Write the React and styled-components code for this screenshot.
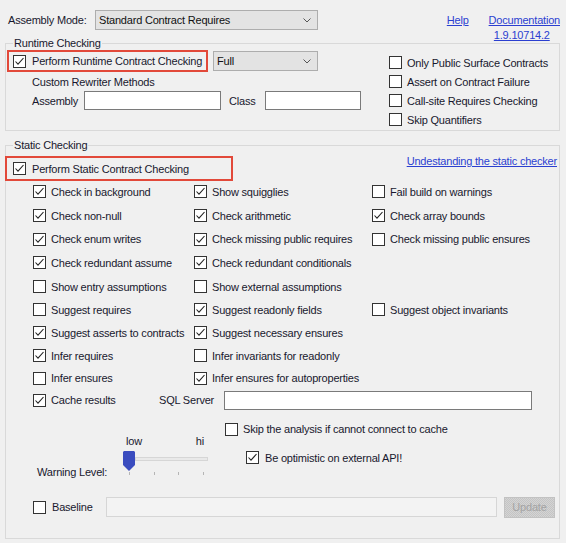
import React from "react";
import styled, { createGlobalStyle } from "styled-components";

const GlobalStyle = createGlobalStyle`
  body {
    margin: 0;
    background: #f0f0f0;
  }
`;

const Dialog = styled.div`
  width: 566px;
  height: 543px;
  background: #f0f0f0;
  font-family: "Liberation Sans", Arial, sans-serif;
  font-size: 11px;
  letter-spacing: -0.2px;
  line-height: 14px;
  color: #18182e;
  overflow: hidden;
`;

const TopBar = styled.div`
  display: flex;
  align-items: flex-start;
  height: 36px;
  padding: 10px 6px 0 8px;
  box-sizing: border-box;
`;

const FieldLabel = styled.span`
  width: ${(p) => p.$w}px;
  line-height: ${(p) => p.$lh || 14}px;
  margin-left: ${(p) => p.$ml || 0}px;
  flex: 0 0 auto;
  white-space: nowrap;
`;

const SelectBox = styled.div`
  width: ${(p) => p.$w}px;
  height: 20px;
  box-sizing: border-box;
  border: 1px solid #adadad;
  background: #e3e3e3;
  display: flex;
  align-items: center;
  justify-content: space-between;
  padding: 0 6px 0 3px;
  margin-left: ${(p) => p.$ml || 0}px;
  flex: 0 0 auto;
  color: #111;
`;

const Link = styled.a`
  color: #2b3fd0;
  text-decoration: underline;
  white-space: nowrap;
  cursor: pointer;
`;

const HelpLink = styled(Link)`
  margin-left: auto;
  margin-right: 20px;
  line-height: 20px;
`;

const DocColumn = styled.div`
  display: flex;
  flex-direction: column;
  align-items: center;
  line-height: 20px;
`;

const Version = styled(Link)`
  line-height: 14px;
  margin-top: -2px;
  margin-left: -5px;
`;

const GroupBox = styled.fieldset`
  margin: ${(p) => p.$mt || 0}px 0 0 5px;
  padding: 0;
  width: 555px;
  height: ${(p) => p.$h}px;
  box-sizing: border-box;
  border: 1px solid #d9d9d9;
  min-width: 0;
`;

const Legend = styled.legend`
  padding: 0 1px;
  margin-left: 7px;
  line-height: 14px;
`;

const RuntimeBody = styled.div`
  display: flex;
`;

const LeftColumn = styled.div`
  flex: 0 0 383px;
  display: flex;
  flex-direction: column;
`;

const Row = styled.div`
  display: flex;
  align-items: center;
  height: ${(p) => p.$h || 20}px;
  margin-top: ${(p) => p.$mt || 0}px;
  padding-left: ${(p) => p.$pl || 0}px;
`;

const RedFrame = styled.div`
  display: flex;
  align-items: center;
  box-sizing: border-box;
  width: ${(p) => p.$w}px;
  height: ${(p) => p.$h}px;
  margin-left: ${(p) => p.$ml}px;
  padding-left: ${(p) => p.$pl}px;
  border: 2px solid #e2493a;
`;

const SubHeading = styled.div`
  margin: 3px 0 0 26px;
`;

const TextBox = styled.div`
  width: ${(p) => p.$w}px;
  height: ${(p) => p.$h || 19}px;
  box-sizing: border-box;
  border: 1px solid ${(p) => (p.$disabled ? "#d6d6d6" : "#7a7a7a")};
  background: ${(p) => (p.$disabled ? "#f3f3f3" : "#fff")};
  flex: 0 0 auto;
`;

const RightColumn = styled.div`
  display: flex;
  flex-direction: column;
  margin-top: 3px;
`;

const CheckItem = styled.label`
  display: flex;
  align-items: center;
  gap: ${(p) => p.$gap || 5}px;
  height: ${(p) => p.$h || 19}px;
  width: ${(p) => (p.$w ? p.$w + "px" : "auto")};
  margin-left: ${(p) => p.$ml || 0}px;
  margin-top: ${(p) => p.$mt || 0}px;
  white-space: nowrap;
  flex: 0 0 auto;
`;

const Box = styled.span`
  width: 13px;
  height: 13px;
  flex: 0 0 13px;
  box-sizing: border-box;
  border: 1px solid #333;
  background: #fff;
  display: flex;
  align-items: center;
  justify-content: center;
`;

const StaticHeader = styled.div`
  display: flex;
  justify-content: space-between;
  align-items: flex-start;
  margin-top: 4px;
  padding-right: 2px;
`;

const HeaderLink = styled(Link)`
  margin-top: -2px;
`;

const OptionGrid = styled.div`
  display: grid;
  grid-template-columns: 161px 178px 1fr;
  grid-template-rows: 23px 25px 22px 25px 23px 23px 23px 23px 22px;
  align-items: center;
  padding-left: 27px;
  margin-top: -1px;
`;

const SliderRow = styled.div`
  display: flex;
  align-items: flex-start;
  height: 42px;
  margin-top: -3px;
  padding-left: 31px;
`;

const WarnLabel = styled.span`
  width: 86px;
  margin-top: 31px;
  white-space: nowrap;
`;

const SliderBlock = styled.div`
  width: 88px;
  display: flex;
  flex-direction: column;
`;

const SliderLabels = styled.div`
  display: flex;
  justify-content: space-between;
  padding: 0 7px 0 3px;
  height: 14px;
`;

const TrackArea = styled.div`
  position: relative;
  height: 24px;
`;

const TrackLine = styled.div`
  margin: 9px 3px 0 12px;
  height: 4px;
  box-sizing: border-box;
  border: 1px solid #d6d6d6;
  background: #e9e9e9;
`;

const Thumb = styled.svg`
  position: absolute;
  left: 0;
  top: 3px;
`;

const Ticks = styled.div`
  display: flex;
  justify-content: space-between;
  padding: 0 7px 0 6px;
  height: 4px;
`;

const Tick = styled.span`
  width: 1px;
  height: 3px;
  background: #b5b5b5;
`;

const UpdateButton = styled.div`
  width: 51px;
  height: 21px;
  margin-left: 7px;
  box-sizing: border-box;
  border: 1px solid #c2c2c2;
  background: repeating-conic-gradient(#c4c4c4 0% 25%, #d4d4d4 0% 50%) 0 0 / 2px 2px;
  color: #a3a3a3;
  display: flex;
  align-items: center;
  justify-content: center;
`;

function Chevron() {
  return (
    <svg width="8" height="5" viewBox="0 0 8 5">
      <polyline points="0.5,0.5 4,4 7.5,0.5" fill="none" stroke="#555" strokeWidth="1" />
    </svg>
  );
}

function Check({ checked, label, gap, h, w, ml, mt }) {
  return (
    <CheckItem $gap={gap} $h={h} $w={w} $ml={ml} $mt={mt}>
      <Box>
        {checked && (
          <svg width="11" height="11" viewBox="0 0 11 11">
            <polyline points="1.5,5.5 4,8.2 9.5,2" fill="none" stroke="#222" strokeWidth="1.1" />
          </svg>
        )}
      </Box>
      {label && <span>{label}</span>}
    </CheckItem>
  );
}

const gridRows = [
  [["Check in background", true], ["Show squigglies", true], ["Fail build on warnings", false]],
  [["Check non-null", true], ["Check arithmetic", true], ["Check array bounds", true]],
  [["Check enum writes", true], ["Check missing public requires", true], ["Check missing public ensures", false]],
  [["Check redundant assume", true], ["Check redundant conditionals", true], null],
  [["Show entry assumptions", false], ["Show external assumptions", false], null],
  [["Suggest requires", false], ["Suggest readonly fields", true], ["Suggest object invariants", false]],
  [["Suggest asserts to contracts", true], ["Suggest necessary ensures", true], null],
  [["Infer requires", true], ["Infer invariants for readonly", false], null],
  [["Infer ensures", false], ["Infer ensures for autoproperties", true], null],
];

export default function App() {
  return (
    <>
      <GlobalStyle />
      <Dialog>
        <TopBar>
          <FieldLabel $w={87} $lh={20}>Assembly Mode:</FieldLabel>
          <SelectBox $w={223}>
            <span>Standard Contract Requires</span>
            <Chevron />
          </SelectBox>
          <HelpLink>Help</HelpLink>
          <DocColumn>
            <Link>Documentation</Link>
            <Version>1.9.10714.2</Version>
          </DocColumn>
        </TopBar>

        <GroupBox $h={95}>
          <Legend>Runtime Checking</Legend>
          <RuntimeBody>
            <LeftColumn>
              <Row $h={22}>
                <RedFrame $w={201} $h={22} $ml={1} $pl={4}>
                  <Check checked label="Perform Runtime Contract Checking" gap={6} />
                </RedFrame>
                <SelectBox $w={105} $ml={5}>
                  <span>Full</span>
                  <Chevron />
                </SelectBox>
              </Row>
              <SubHeading>Custom Rewriter Methods</SubHeading>
              <Row $h={19} $mt={2} $pl={26}>
                <FieldLabel $w={52}>Assembly</FieldLabel>
                <TextBox $w={137} />
                <FieldLabel $w={36} $ml={8}>Class</FieldLabel>
                <TextBox $w={96} />
              </Row>
            </LeftColumn>
            <RightColumn>
              <Check label="Only Public Surface Contracts" />
              <Check label="Assert on Contract Failure" />
              <Check label="Call-site Requires Checking" />
              <Check label="Skip Quantifiers" />
            </RightColumn>
          </RuntimeBody>
        </GroupBox>

        <GroupBox $h={401} $mt={7}>
          <Legend>Static Checking</Legend>
          <StaticHeader>
            <RedFrame $w={228} $h={25} $ml={-1} $pl={6}>
              <Check checked label="Perform Static Contract Checking" gap={6} />
            </RedFrame>
            <HeaderLink>Undestanding the static checker</HeaderLink>
          </StaticHeader>
          <OptionGrid>
            {gridRows.map((row, r) =>
              row.map((cell, c) =>
                cell ? (
                  <Check key={r + "-" + c} label={cell[0]} checked={cell[1]} />
                ) : (
                  <span key={r + "-" + c} />
                )
              )
            )}
          </OptionGrid>
          <Row $h={22} $pl={27}>
            <Check checked label="Cache results" w={126} />
            <FieldLabel $w={65}>SQL Server</FieldLabel>
            <TextBox $w={308} />
          </Row>
          <Row $h={16} $mt={10} $pl={219}>
            <Check label="Skip the analysis if cannot connect to cache" />
          </Row>
          <SliderRow>
            <WarnLabel>Warning Level:</WarnLabel>
            <SliderBlock>
              <SliderLabels>
                <span>low</span>
                <span>hi</span>
              </SliderLabels>
              <TrackArea>
                <TrackLine />
                <Thumb width="12" height="20" viewBox="0 0 12 20">
                  <polygon points="0,1 1,0 11,0 12,1 12,14 6,20 0,14" fill="#3a4cbf" />
                </Thumb>
              </TrackArea>
              <Ticks>
                <Tick />
                <Tick />
                <Tick />
                <Tick />
              </Ticks>
            </SliderBlock>
            <Check checked label="Be optimistic on external API!" gap={6} ml={35} mt={14} />
          </SliderRow>
          <Row $h={22} $mt={20} $pl={27}>
            <Check label="Baseline" gap={6} w={73} />
            <TextBox $w={391} $h={20} $disabled />
            <UpdateButton>Update</UpdateButton>
          </Row>
        </GroupBox>
      </Dialog>
    </>
  );
}
